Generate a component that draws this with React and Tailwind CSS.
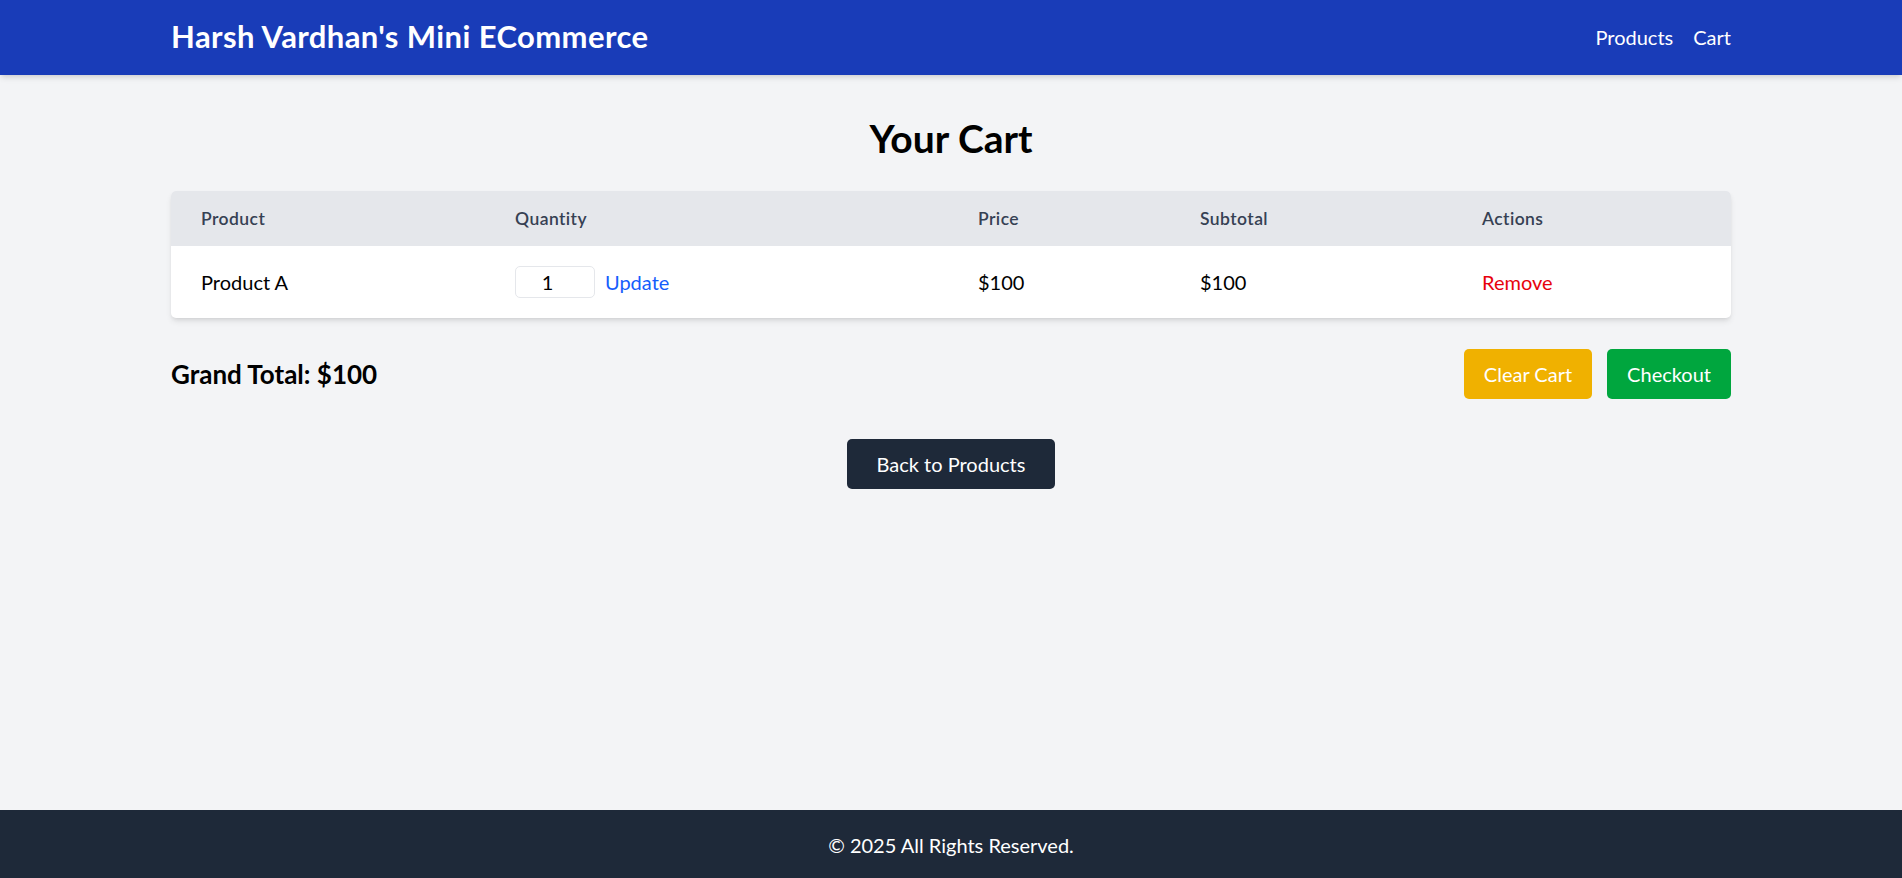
import { useState } from 'react';

export default function App() {
  const [qty, setQty] = useState(1);

  return (
    <div className="min-h-[880px] flex flex-col bg-gray-100 font-['Lato',sans-serif] text-black">
      {/* Navbar */}
      <header className="bg-blue-800 text-white shadow-md">
        <div className="max-w-[1600px] mx-auto px-[20px] h-[75px] flex items-center justify-between">
          <h1 className="text-[31px] leading-[40px] font-bold tracking-[0.4px] mb-[4px]">Harsh Vardhan's Mini ECommerce</h1>
          <nav className="flex gap-[20px] text-[20px] leading-[30px] mb-[2px]">
            <a href="#" className="hover:underline">Products</a>
            <a href="#" className="hover:underline">Cart</a>
          </nav>
        </div>
      </header>

      {/* Cart */}
      <main className="flex-1 w-full max-w-[1600px] mx-auto px-[20px] pt-[41px] pb-[40px]">
        <h2 className="text-[39px] leading-[45px] font-bold text-center mb-[30px]">Your Cart</h2>

        <div className="bg-white rounded-[5px] shadow-md overflow-hidden">
          <table className="w-full table-fixed text-left">
            <thead className="bg-gray-200 text-gray-700">
              <tr className="text-[17.5px] leading-[25px] font-semibold tracking-wide">
                <th className="w-[314px] px-[30px] py-[15px] font-semibold">Product</th>
                <th className="w-[463px] px-[30px] py-[15px] font-semibold">Quantity</th>
                <th className="w-[222px] px-[30px] py-[15px] font-semibold">Price</th>
                <th className="w-[282px] px-[30px] py-[15px] font-semibold">Subtotal</th>
                <th className="px-[30px] py-[15px] font-semibold">Actions</th>
              </tr>
            </thead>
            <tbody className="text-[20px] leading-[30px]">
              <tr>
                <td className="px-[30px] py-[20px]">Product A</td>
                <td className="px-[30px] py-[20px]">
                  <div className="flex items-center">
                    <input
                      type="number"
                      min="1"
                      value={qty}
                      onChange={(e) => setQty(e.target.value)}
                      className="w-[80px] h-[32px] border border-gray-200 rounded-[5px] text-center"
                    />
                    <button className="ml-[10px] text-blue-600 hover:underline">Update</button>
                  </div>
                </td>
                <td className="px-[30px] py-[20px]">$100</td>
                <td className="px-[30px] py-[20px]">$100</td>
                <td className="px-[30px] py-[20px]">
                  <button className="text-red-600 hover:underline">Remove</button>
                </td>
              </tr>
            </tbody>
          </table>
        </div>

        <div className="mt-[31px] flex items-center justify-between">
          <h3 className="text-[26px] leading-[35px] font-bold">Grand Total: $100</h3>
          <div className="flex gap-[15px]">
            <button className="bg-yellow-500 text-white px-[20px] py-[10px] text-[20px] leading-[30px] rounded-[5px]">
              Clear Cart
            </button>
            <button className="bg-green-600 text-white px-[20px] py-[10px] text-[20px] leading-[30px] rounded-[5px]">
              Checkout
            </button>
          </div>
        </div>

        <div className="mt-[40px] text-center">
          <a href="#" className="inline-block bg-gray-800 text-white px-[30px] py-[10px] text-[20px] leading-[30px] rounded-[5px]">
            Back to Products
          </a>
        </div>
      </main>

      {/* Footer */}
      <footer className="bg-gray-800 text-white text-center py-[20px] text-[20px] leading-[30px]">
        © 2025 All Rights Reserved.
      </footer>
    </div>
  );
}
